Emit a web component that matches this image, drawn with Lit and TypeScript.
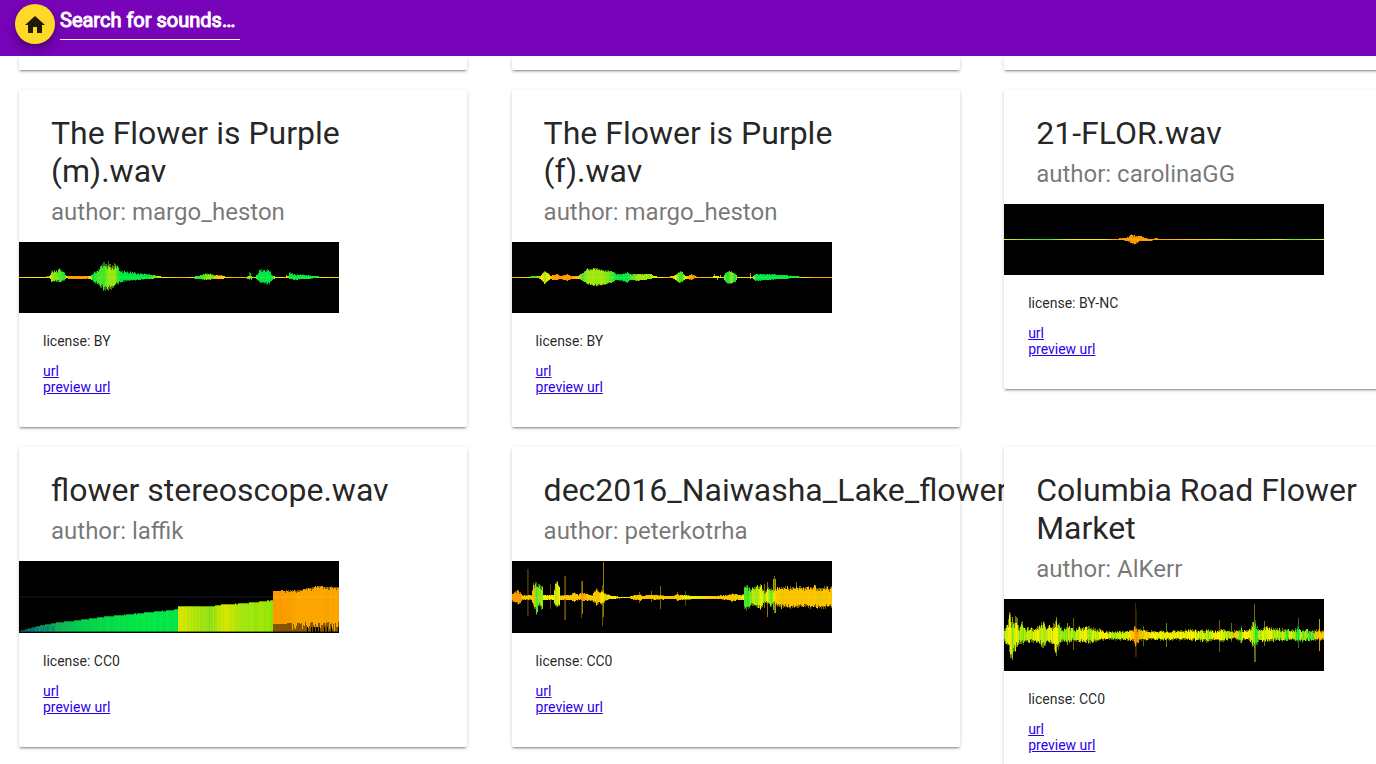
import { LitElement, html, svg, css } from "lit";
import { customElement, property } from "lit/decorators.js";

/** Envelope key point: x, reach above the axis, reach below it, colour. */
type Key = [number, number, number, string];
/** Single transient: x, reach above, reach below, colour, opacity. */
type Spike = [number, number, number, string, number];

interface Wave {
  height: number;
  axis: number;
  jitter: number;
  hue: number;
  keys: Key[];
  spikes?: Spike[];
  staircase?: boolean;
}

interface Sound {
  name: string;
  author: string;
  license: string;
  wave: Wave;
}

const O = "#ff9800";
const A = "#ffc400";
const Y = "#f2ee00";
const L = "#9be810";
const G = "#3fe62c";
const E = "#00e648";

const WAVES: Wave[] = [
  {
    height: 71, axis: 35, jitter: 0.4, hue: 10,
    keys: [
      [0, 0, 0, A], [12, 0, 0, Y], [25, 0, 0, Y], [29, 1, 0, A], [31, 2, 1, Y], [32, 6, 4, L],
      [42, 8, 4, G], [45, 4, 3, E], [47, 1, 0, Y], [49, 1, 1, O], [68, 1, 1, O], [71, 1, 1, Y],
      [73, 3, 3, E], [78, 8, 7, G], [84, 14, 12, G], [90, 14, 12, L], [95, 13, 10, L], [98, 12, 7, G],
      [101, 6, 5, E], [110, 6, 3, E], [120, 4, 2, E], [130, 3, 1, E], [138, 1, 0, L], [145, 0, 0, Y],
      [164, 0, 0, O], [172, 0, 0, Y], [178, 1, 1, E], [184, 3, 2, G], [190, 4, 2, L], [194, 3, 1, G],
      [195, 2, 1, A], [202, 2, 1, A], [207, 0, 0, Y], [215, 0, 0, O], [226, 0, 0, O], [229, 1, 1, L],
      [236, 0, 0, L], [238, 4, 3, E], [241, 8, 6, E], [250, 7, 6, E], [253, 2, 2, E], [256, 0, 0, Y],
      [266, 0, 0, A], [267, 1, 0, A], [269, 1, 0, L], [270, 5, 1, E], [274, 3, 2, E], [290, 2, 1, E],
      [298, 1, 0, E], [302, 0, 0, Y], [319, 0, 0, A],
    ],
    spikes: [[230, 5, 2, E, 0.6], [231, 4, -1, G, 0.8], [232, 1, 2, E, 0.8], [267, 2, 0, A, 0.9]],
  },
  {
    height: 71, axis: 35, jitter: 0.2, hue: 14,
    keys: [
      [0, 0, 0, O], [17, 0, 0, Y], [19, 1, 0, E], [24, 1, 0, G], [28, 1, 1, A], [30, 4, 3, Y],
      [32, 6, 6, L], [36, 4, 3, Y], [38, 1, 1, A], [41, 2, 2, O], [45, 3, 2, O], [48, 1, 1, O],
      [55, 3, 3, O], [59, 1, 1, O], [66, 1, 1, A], [70, 4, 3, G], [75, 8, 6, L], [81, 9, 8, L],
      [92, 7, 7, L], [100, 6, 5, G], [104, 3, 2, E], [110, 3, 3, E], [115, 5, 5, E], [118, 3, 2, G],
      [126, 3, 3, L], [138, 3, 1, L], [142, 1, 0, Y], [148, 0, 0, Y], [155, 0, 0, O], [160, 1, 0, A],
      [163, 2, 2, Y], [167, 6, 5, G], [170, 5, 4, G], [173, 1, 1, Y], [175, 1, 1, A], [179, 3, 2, O],
      [183, 1, 0, O], [185, 0, 0, O], [199, 0, 0, A], [202, 1, 0, Y], [211, 0, 0, Y], [213, 4, 4, G],
      [215, 6, 6, E], [219, 6, 6, L], [223, 3, 4, E], [225, 0, 0, Y], [236, 0, 0, A], [240, 0, 0, Y],
      [243, 3, 3, E], [255, 3, 2, E], [270, 2, 1, E], [284, 1, 0, E], [290, 0, 0, Y], [302, 0, 0, O], [319, 0, 0, O],
    ],
    spikes: [[202, 3, 0, Y, 0.7], [205, -1, 2, L, 0.8], [208, 2, 0, Y, 0.8], [238, 4, 1, A, 0.8]],
  },
  {
    height: 71, axis: 35, jitter: 0.4, hue: 8,
    keys: [
      [0, 0, 0, Y], [14, 0, 0, L], [28, 0, 0, G], [44, 0, 0, E], [54, 0, 0, L], [64, 0, 0, Y],
      [100, 0, 0, Y], [110, 0, 0, O], [117, 1, 0, O], [122, 1, 1, O], [125, 3, 2, O], [127, 5, 4, O],
      [130, 4, 5, O], [134, 3, 2, O], [137, 3, 1, O], [140, 1, 1, O], [146, 0, 1, O], [153, 1, 0, O],
      [155, 0, 0, O], [185, 0, 0, A], [210, 0, 0, Y], [250, 0, 0, L], [275, 0, 0, Y], [290, 0, 0, G], [319, 0, 0, Y],
    ],
  },
  {
    height: 72, axis: 71, jitter: 0.02, hue: 18, staircase: true,
    keys: [
      [0, 1, 0, "#087a78"], [7, 3, 0, "#087a78"], [14, 5, 0, "#0a8a70"], [22, 7, 0, "#089a60"],
      [40, 10, 0, "#04b456"], [58, 12, 0, "#02cc4e"], [80, 15, 0, "#02d84a"], [120, 19, 0, E],
      [158, 23, 0, E], [159, 26, 0, "#dde600"], [173, 26, 0, "#b4e60a"], [190, 26, 0, "#8fe018"],
      [205, 28, 0, "#d0e600"], [225, 29, 0, "#a2e610"], [253, 32, 0, "#94e606"], [254, 41, 0, O],
      [280, 42, 0, "#ffa500"], [298, 46, 0, "#ffa500"], [319, 45, 0, "#ffa500"],
    ],
  },
  {
    height: 72, axis: 36, jitter: 0.35, hue: 30,
    keys: [
      [0, 4, 4, O], [6, 7, 6, O], [8, 5, 5, O], [10, 2, 2, A], [19, 2, 2, A], [21, 14, 9, A],
      [24, 14, 15, G], [27, 12, 8, L], [30, 14, 12, L], [31, 2, 2, Y], [41, 2, 2, Y], [43, 16, 10, L],
      [47, 12, 9, Y], [48, 2, 2, A], [58, 2, 2, A], [62, 5, 4, A], [66, 2, 2, A], [70, 5, 3, O],
      [75, 3, 3, A], [80, 2, 3, A], [84, 9, 7, A], [87, 5, 5, A], [90, 7, 7, Y], [93, 4, 3, A],
      [99, 1, 1, Y], [116, 0, 0, Y], [119, 1, 1, A], [122, 2, 2, A], [126, 2, 2, A], [128, 3, 4, A],
      [130, 1, 1, A], [135, 2, 1, A], [145, 2, 2, A],
      [159, 1, 1, A], [163, 2, 1, A], [165, 5, 3, A], [167, 2, 2, A], [172, 2, 2, Y], [185, 1, 1, Y],
      [200, 1, 1, A], [215, 2, 2, A], [220, 4, 4, A], [226, 2, 2, A], [231, 3, 3, Y], [232, 10, 11, G],
      [234, 12, 12, G], [240, 9, 8, L], [245, 12, 11, L], [249, 12, 11, Y], [252, 4, 4, L], [255, 10, 5, Y],
      [259, 9, 9, G], [261, 5, 4, Y], [265, 10, 9, A], [272, 10, 10, A], [290, 11, 10, A], [319, 10, 10, A],
    ],
    spikes: [
      [15, 28, 18, A, 0.25], [16, 28, 18, A, 0.2], [38, 13, 11, A, 0.35], [52, 21, 22, A, 0.3],
      [53, 21, 22, A, 0.4], [69, 16, 20, A, 0.35], [70, 16, 16, A, 0.6], [90, 12, 28, Y, 0.4],
      [91, 35, 19, A, 0.6], [127, 5, 5, A, 0.5], [139, 6, 4, A, 0.5], [148, 11, 11, A, 0.5],
      [173, 6, 8, A, 0.35], [252, 13, 10, Y, 0.5], [255, 15, 19, A, 0.6], [261, 18, 12, Y, 0.7],
      [262, 21, 15, Y, 0.5], [263, 18, 15, Y, 0.7], [284, 15, 9, A, 0.5],
    ],
  },
  {
    height: 72, axis: 36, jitter: 0.5, hue: 55,
    keys: [
      [0, 8, 7, L], [3, 10, 10, Y], [5, 20, 14, Y], [8, 16, 22, L], [11, 19, 15, Y], [13, 17, 12, Y],
      [15, 9, 9, L], [18, 13, 9, L], [21, 7, 6, L], [33, 8, 6, Y], [38, 14, 14, L], [42, 8, 7, L],
      [49, 10, 9, Y], [52, 17, 18, Y], [55, 11, 9, L], [58, 5, 5, L], [64, 9, 7, L], [70, 5, 5, L],
      [78, 9, 7, Y], [86, 8, 7, L], [96, 6, 5, Y], [100, 3, 4, Y], [110, 4, 4, L], [122, 4, 4, Y],
      [129, 6, 6, A], [131, 12, 11, O], [133, 6, 7, O], [136, 5, 4, A], [150, 4, 4, Y],
      [165, 4, 4, Y], [180, 5, 4, Y], [190, 6, 5, Y], [204, 5, 6, L], [212, 4, 4, Y], [218, 7, 6, Y],
      [224, 4, 4, L], [230, 4, 3, A], [235, 5, 5, L], [237, 9, 8, L], [239, 4, 4, Y], [245, 6, 5, Y],
      [249, 13, 11, L], [251, 13, 11, G], [255, 6, 5, L], [262, 8, 6, Y], [275, 6, 5, L], [281, 6, 5, L],
      [283, 7, 6, E], [285, 5, 4, Y], [290, 6, 5, L], [293, 10, 8, E], [296, 5, 6, L], [306, 6, 5, G],
      [313, 5, 4, A], [316, 6, 5, A], [319, 4, 4, A],
    ],
    spikes: [
      [6, 22, 22, Y, 0.5], [8, 18, 24, L, 0.5], [52, 18, 20, L, 0.6], [63, 12, 9, Y, 0.6], [69, 17, 14, Y, 0.4],
      [131, 32, 21, O, 0.25], [132, 26, 21, O, 0.2], [139, 9, 10, L, 0.5], [162, 12, 11, L, 0.6],
      [215, 15, 16, Y, 0.4], [227, 12, 6, L, 0.5], [250, 31, 26, A, 0.5], [251, 12, 26, L, 0.5],
      [260, 14, 10, Y, 0.5], [294, 17, 12, G, 0.5], [315, 16, 15, A, 0.8],
    ],
  },
];

const SOUNDS: Sound[] = [
  { name: "The Flower is Purple (m).wav", author: "margo_heston", license: "BY", wave: WAVES[0] },
  { name: "The Flower is Purple (f).wav", author: "margo_heston", license: "BY", wave: WAVES[1] },
  { name: "21-FLOR.wav", author: "carolinaGG", license: "BY-NC", wave: WAVES[2] },
  { name: "flower stereoscope.wav", author: "laffik", license: "CC0", wave: WAVES[3] },
  { name: "dec2016_Naiwasha_Lake_flowers.wav", author: "peterkotrha", license: "CC0", wave: WAVES[4] },
  { name: "Columbia Road Flower Market", author: "AlKerr", license: "CC0", wave: WAVES[5] },
];

/** Repeatable noise in 0..1, so a waveform looks the same on each render. */
const noise = (n: number): number => {
  const v = Math.sin(n * 127.1 + 11.7) * 43758.5453;
  return v - Math.floor(v);
};

const rgb = (hex: string): number[] => [1, 3, 5].map((i) => parseInt(hex.slice(i, i + 2), 16));

@customElement("sound-wave")
export class SoundWave extends LitElement {
  @property({ attribute: false }) wave!: Wave;

  static styles = css`
    :host {
      display: block;
    }
    .plot {
      display: block;
      background: #000;
      shape-rendering: crispEdges;
    }
  `;

  private sample(x: number) {
    const { keys, jitter, hue } = this.wave;
    let i = 0;
    while (i < keys.length - 2 && keys[i + 1][0] <= x) i++;
    const a = keys[i];
    const b = keys[i + 1];
    const t = Math.min(1, Math.max(0, (x - a[0]) / (b[0] - a[0])));
    const up = (a[1] + (b[1] - a[1]) * t) * (1 + jitter * (0.35 - noise(x + 200)));
    const down = (a[2] + (b[2] - a[2]) * t) * (1 + jitter * (0.35 - noise(x + 650)));
    const ca = rgb(a[3]);
    const cb = rgb(b[3]);
    const shift = up > 1 ? (noise(x + 900) - 0.5) * 2 * hue : 0;
    const color = ca.map((c, k) => Math.round(Math.min(255, Math.max(0, c + (cb[k] - c) * t + (k === 0 ? shift : 0)))));
    return {
      up,
      down,
      coreUp: Math.round(up * (1 - jitter * noise(x))),
      coreDown: Math.round(down * (1 - jitter * noise(x + 400))),
      fill: `rgb(${color.join(",")})`,
    };
  }

  private stair(x: number) {
    const s = this.sample(x);
    if (x < 254) {
      const h = Math.round(s.up);
      return svg`
        <rect x=${x} y=${71 - h} width="1" height=${h} fill=${s.fill}></rect>
        <rect x=${x} y=${71 - h} width="1" height="1" fill="#000" opacity="0.3"></rect>
        ${x < 45 && noise(x) > 0.6
          ? svg`<rect x=${x} y=${71 - Math.round(h * 0.7)} width="1" height=${Math.round(h * 0.6)} fill="#124a9a" opacity="0.5"></rect>`
          : null}`;
    }
    const top = 71 - Math.round(s.up);
    const notch = x > 264 ? Math.floor(noise(x) * 3.4) : 0;
    const base = x < 268 ? 63 : 61 + Math.round(noise(x + 50) * 2);
    const tooth = x > 270 && noise(x + 77) > 0.55 ? Math.round(noise(x + 31) * 8) : 0;
    return svg`
      <rect x=${x} y=${top} width="1" height=${71 - top} fill="#855600"></rect>
      <rect x=${x} y=${top + notch} width="1" height=${base - top - notch + tooth} fill=${s.fill}></rect>
      ${x > 284 && noise(x + 12) > 0.7 ? svg`<rect x=${x} y="66" width="1" height="5" fill="#000"></rect>` : null}`;
  }

  private bar(x: number) {
    const s = this.sample(x);
    const axis = this.wave.axis;
    const up = Math.round(s.up);
    const down = Math.round(s.down);
    return svg`
      <rect x=${x} y=${axis - up} width="1" height=${up + down + 1} fill=${s.fill} opacity="0.5"></rect>
      <rect x=${x} y=${axis - s.coreUp} width="1" height=${s.coreUp + s.coreDown + 1} fill=${s.fill}></rect>`;
  }

  render() {
    const { height, axis, staircase, spikes = [] } = this.wave;
    const columns = Array.from({ length: 320 }, (_, x) => x);
    return html`
      <svg class="plot" width="320" height=${height} viewBox="0 0 320 ${height}" role="img" aria-label="Waveform">
        ${spikes.map(
          ([x, up, down, color, alpha]) =>
            svg`<rect x=${x} y=${axis - up} width="1" height=${up + down + 1} fill=${color} opacity=${alpha}></rect>`,
        )}
        ${columns.map((x) => (staircase ? this.stair(x) : this.bar(x)))}
        ${staircase
          ? svg`<rect x="0" y="35" width="320" height="2" fill="#fff" opacity="0.05"></rect>
                <rect x="0" y="70" width="320" height="1" fill="#000" opacity="0.4"></rect>`
          : svg`<rect x="0" y=${axis} width="320" height="1" fill="#ff0" opacity="0.15"></rect>`}
      </svg>
    `;
  }
}

@customElement("sound-card")
export class SoundCard extends LitElement {
  @property({ attribute: false }) sound?: Sound;

  static styles = css`
    :host {
      display: block;
      box-sizing: border-box;
      width: 448px;
      min-height: 14px;
      border-radius: 2px;
      background: #fff;
      color: rgba(0, 0, 0, 0.87);
      font-size: 14px;
      line-height: 16px;
      box-shadow:
        0 3px 1px -2px rgba(0, 0, 0, 0.2),
        0 2px 2px 0 rgba(0, 0, 0, 0.14),
        0 1px 5px 0 rgba(0, 0, 0, 0.12);
    }
    .head {
      padding: 24px 32px 16px;
    }
    .name {
      margin: 0 0 8px;
      font-size: 32px;
      font-weight: 400;
      line-height: 38px;
    }
    .author {
      margin: 0;
      color: rgba(0, 0, 0, 0.54);
      font-size: 24px;
      line-height: 28px;
    }
    .body {
      padding: 20px 24px 32px;
    }
    .license {
      margin: 0 0 14px;
    }
    .link {
      display: table;
      color: #2a00ee;
    }
  `;

  render() {
    const sound = this.sound;
    if (!sound) return null;
    return html`
      <header class="head">
        <h2 class="name">${sound.name}</h2>
        <p class="author">author: ${sound.author}</p>
      </header>
      <sound-wave .wave=${sound.wave}></sound-wave>
      <div class="body">
        <p class="license">license: ${sound.license}</p>
        <a class="link" href="#sound">url</a>
        <a class="link" href="#preview">preview url</a>
      </div>
    `;
  }
}

@customElement("app-root")
export class AppRoot extends LitElement {
  static styles = css`
    :host {
      display: flex;
      flex-direction: column;
      height: 100vh;
      overflow: hidden;
      background: #fff;
      font-family: Roboto, "Liberation Sans", sans-serif;
    }
    .bar {
      display: flex;
      flex: none;
      align-items: flex-start;
      gap: 5px;
      box-sizing: border-box;
      height: 56px;
      padding: 4px 15px;
      background: #7704b8;
    }
    .home {
      display: grid;
      place-items: center;
      width: 40px;
      height: 40px;
      padding: 1px 0 0;
      border: 0;
      border-radius: 50%;
      background: #ffd928;
      color: rgba(0, 0, 0, 0.87);
      box-shadow:
        0 3px 5px -1px rgba(0, 0, 0, 0.2),
        0 6px 10px 0 rgba(0, 0, 0, 0.14),
        0 1px 18px 0 rgba(0, 0, 0, 0.12);
      cursor: pointer;
    }
    .search {
      box-sizing: border-box;
      width: 180px;
      height: 36px;
      padding: 0 0 3px;
      border: 0;
      border-bottom: 1px solid #fff;
      border-radius: 0;
      outline: 0;
      background: transparent;
      color: #fff;
      font: 400 20px/24px Roboto, "Liberation Sans", sans-serif;
      -webkit-text-stroke: 1px #fff;
    }
    .search::placeholder {
      color: #fff;
      opacity: 1;
    }
    .results {
      display: grid;
      flex: 1;
      grid-template-columns: repeat(3, 36.3%);
      grid-auto-rows: max-content;
      align-content: start;
      align-items: start;
      row-gap: 20px;
      min-height: 0;
      padding-left: 19px;
      overflow: hidden;
    }
  `;

  render() {
    return html`
      <header class="bar">
        <button class="home" type="button" aria-label="Home">
          <svg width="24" height="24" viewBox="0 0 24 24" fill="currentColor" aria-hidden="true">
            <path d="M10 20v-6h4v6h5v-8h3L12 3 2 12h3v8z"></path>
          </svg>
        </button>
        <input class="search" type="text" aria-label="Search for sounds" placeholder="Search for sounds…" />
      </header>
      <main class="results">
        <sound-card></sound-card>
        <sound-card></sound-card>
        <sound-card></sound-card>
        ${SOUNDS.map((sound) => html`<sound-card .sound=${sound}></sound-card>`)}
      </main>
    `;
  }
}
